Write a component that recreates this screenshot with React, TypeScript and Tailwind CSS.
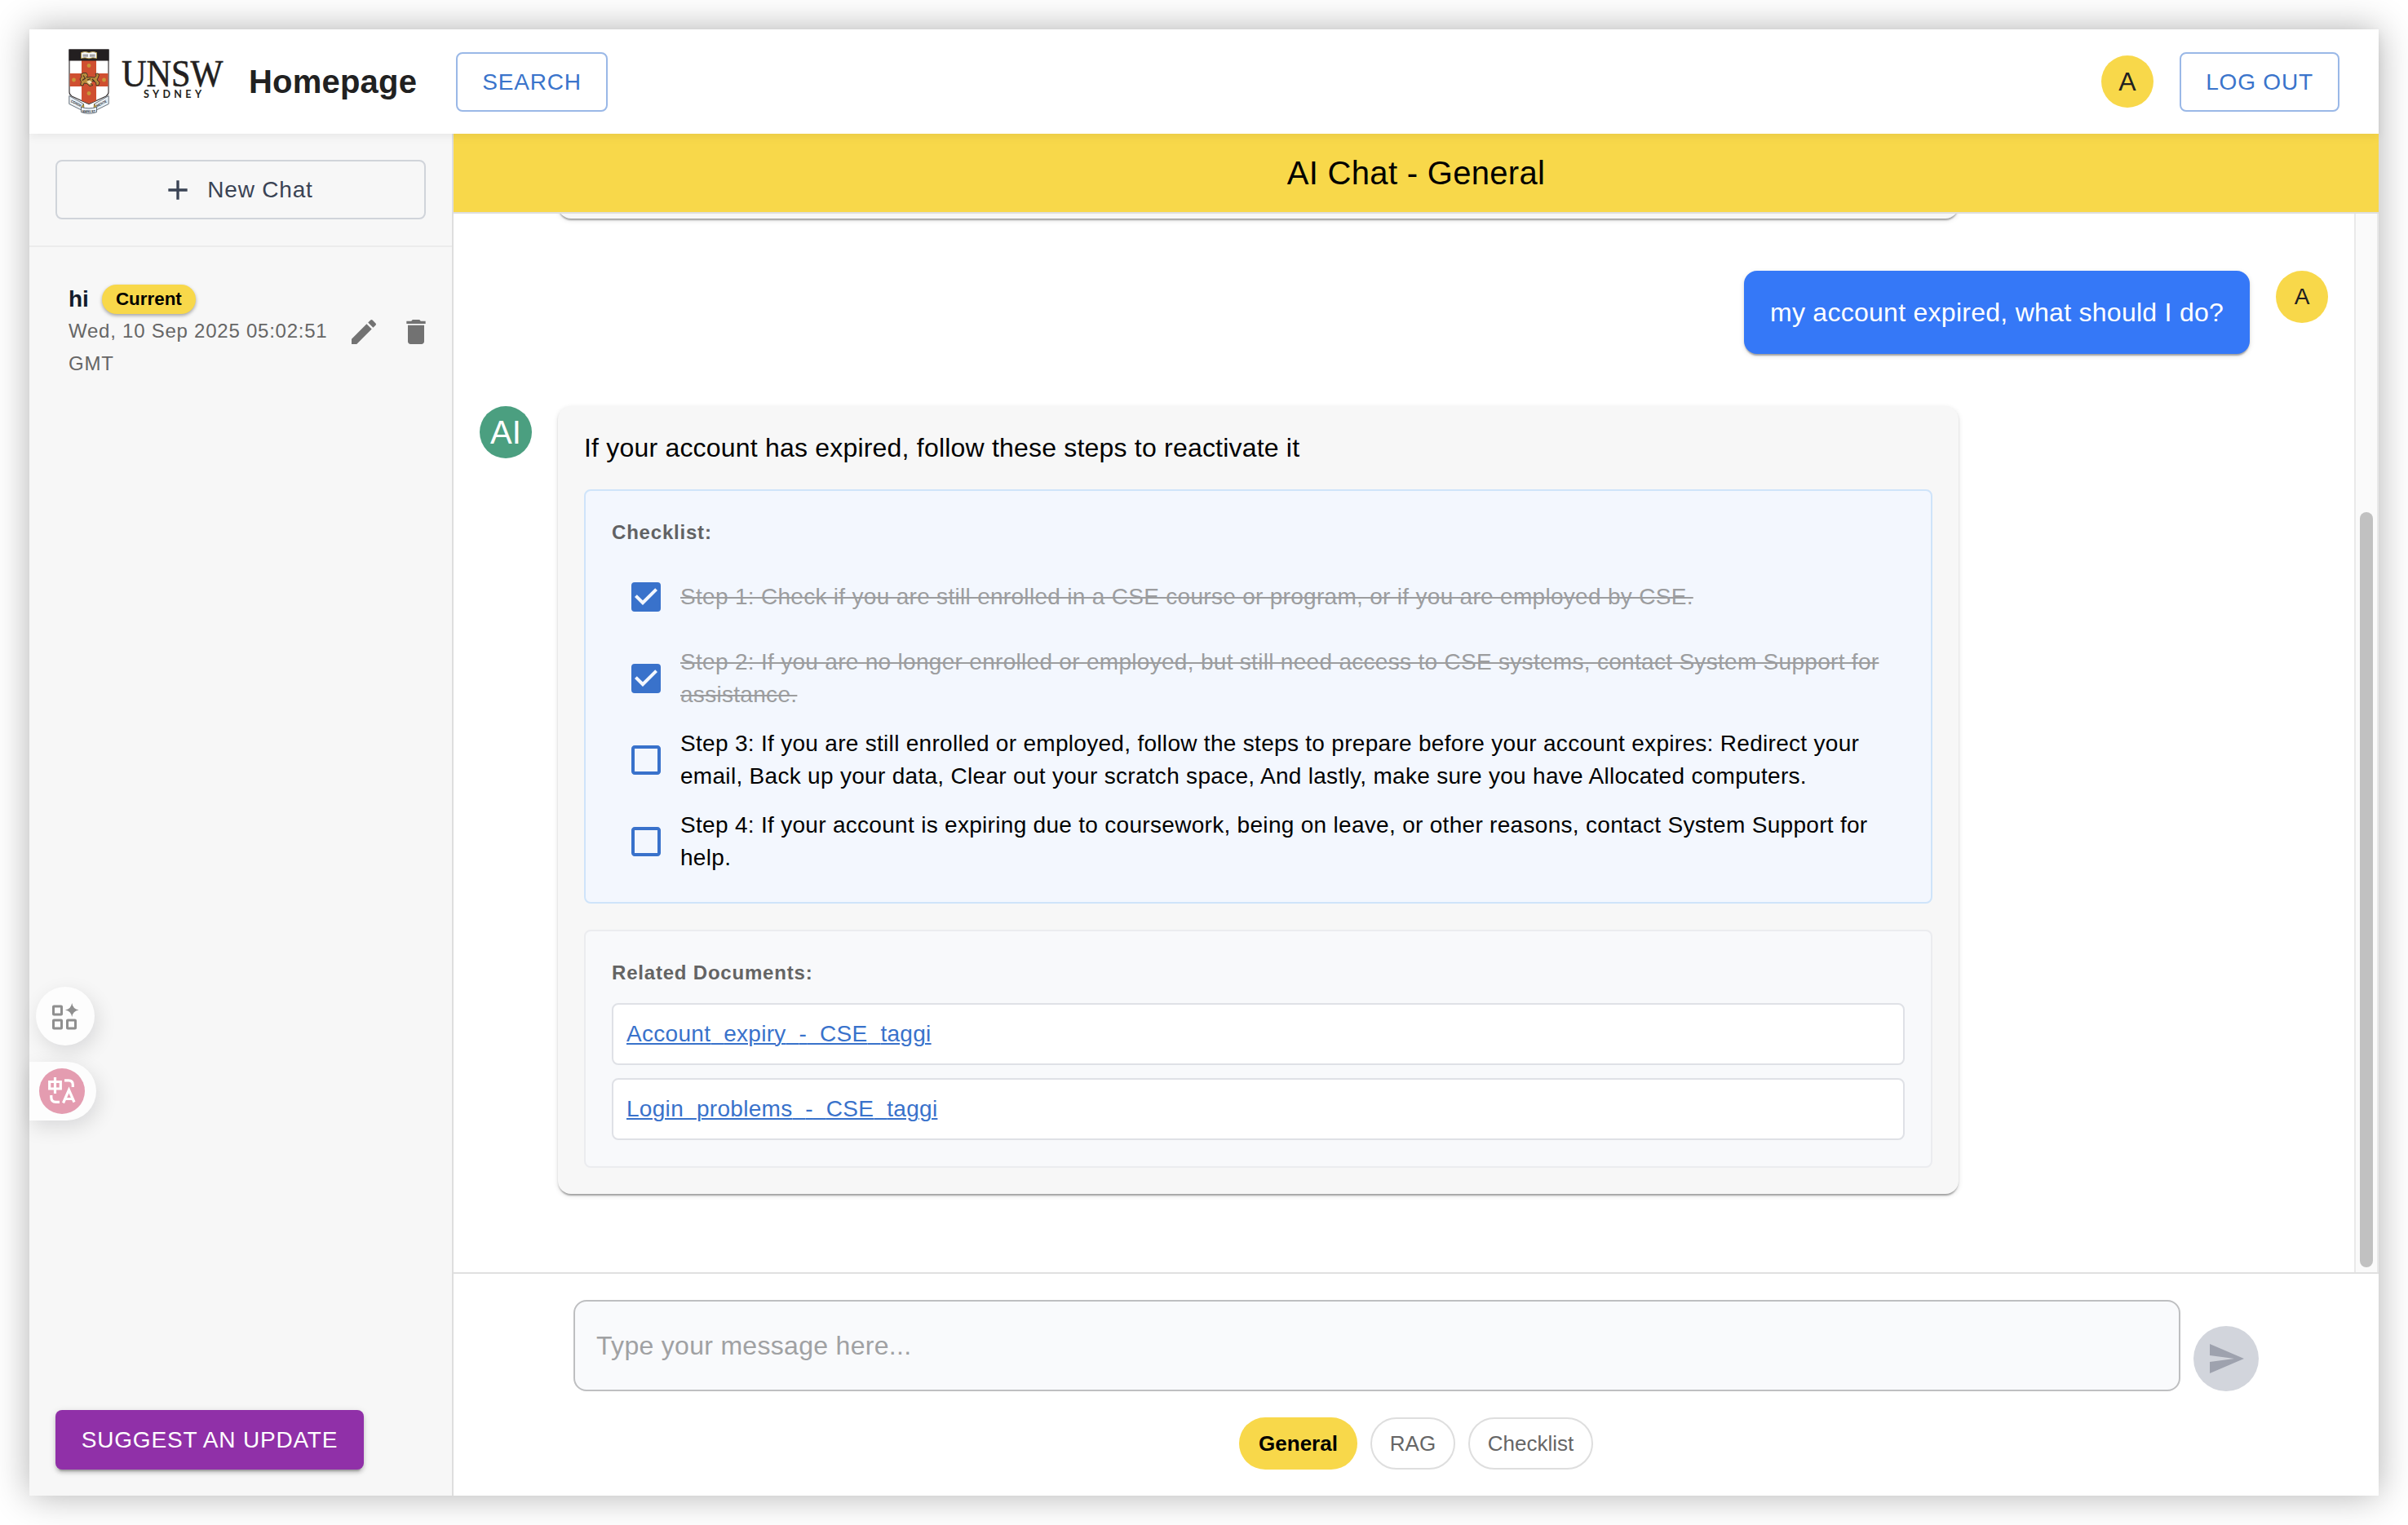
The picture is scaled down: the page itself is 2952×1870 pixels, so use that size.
import React from "react";
import {
  MdAdd,
  MdCheckBox,
  MdCheckBoxOutlineBlank,
  MdDelete,
  MdEdit,
  MdSend,
} from "react-icons/md";

const paperShadow =
  "shadow-[0_4px_2px_-2px_rgba(0,0,0,0.2),0_2px_2px_0_rgba(0,0,0,0.14),0_2px_6px_0_rgba(0,0,0,0.12)]";

const steps = [
  {
    done: true,
    lines: ["Step 1: Check if you are still enrolled in a CSE course or program, or if you are employed by CSE."],
  },
  {
    done: true,
    lines: [
      "Step 2: If you are no longer enrolled or employed, but still need access to CSE systems, contact System Support for",
      "assistance.",
    ],
  },
  {
    done: false,
    lines: [
      "Step 3: If you are still enrolled or employed, follow the steps to prepare before your account expires: Redirect your",
      "email, Back up your data, Clear out your scratch space, And lastly, make sure you have Allocated computers.",
    ],
  },
  {
    done: false,
    lines: [
      "Step 4: If your account is expiring due to coursework, being on leave, or other reasons, contact System Support for",
      "help.",
    ],
  },
];

const documents = ["Account_expiry_-_CSE_taggi", "Login_problems_-_CSE_taggi"];

function Logo() {
  return (
    <svg width="192" height="80" viewBox="0 0 192 80" className="shrink-0 overflow-visible">
      <path d="M1 1H49V53Q49 56 46 58L25 67.500L4 58Q1 56 1 53Z" fill="#fff" stroke="#3a3637" strokeWidth="1.2" />
      <path d="M16 14H34V63.500L25 67L16 63.500Z" fill="#cf4f31" />
      <path d="M1.500 30H48.500V46H1.500Z" fill="#cf4f31" />
      <path d="M0.500 0.500H49.500V14.500H0.500Z" fill="#231f20" />
      <path d="M15.500 4.500Q20 2.500 25 4.500Q30 2.500 34.500 4.500V11.500Q30 10 25 11.800Q20 10 15.500 11.500Z" fill="#f4f6f8" stroke="#b59a45" strokeWidth="0.9" />
      <path d="M17.500 7.300H24M26 7.300H32.500M17.500 9H24M26 9H32.500" stroke="#5a5655" strokeWidth="0.8" />
      <g fill="#c8973a">
        <circle cx="25" cy="20.500" r="2.400" />
        <circle cx="25" cy="54.500" r="2.400" />
        <circle cx="6.500" cy="38" r="2.400" />
        <circle cx="43.500" cy="38" r="2.400" />
      </g>
      <path
        d="M14.500 44L15.500 40.500L14 37L16 34L15 31.500L18 29.500L22 29.500L23.500 32.500L22 35L27 34.500L32 35L34 33L33 30.500L36 30L37.500 32L36 36L35 38L38 41L37 44.500L34 45L33.500 41L30 39L27 42L30 44.500L26 45.500L22.500 42.500L19 42L18 45Z"
        fill="#b98b3c"
        stroke="#4b3526"
        strokeWidth="1"
      />
      <path d="M18 32.500L20.500 36L17 38.500M23 38L27 36.500M29 37L32 40" fill="none" stroke="#3d2b20" strokeWidth="1.100" />
      <path d="M22 40L26 38.500L29 41L25.500 43.500Z" fill="#efe2b5" />
      <path d="M0.800 57.500L18.500 67.500L17 75.500L0.800 67.500Z" fill="#eaf1f7" stroke="#55606a" strokeWidth="0.900" />
      <path d="M49.200 57.500L31.500 67.500L33 75.500L49.200 67.500Z" fill="#eaf1f7" stroke="#55606a" strokeWidth="0.900" />
      <path d="M18.500 67.500L15.500 71.500L19 74Z M31.500 67.500L34.500 71.500L31 74Z" fill="#d9b63c" stroke="#6b5a28" strokeWidth="0.700" />
      <path d="M15.500 71.200Q25 74.500 34.500 71.200V77.500Q25 81 15.500 77.500Z" fill="#eaf1f7" stroke="#55606a" strokeWidth="0.900" />
      <g fontFamily="'Liberation Sans', sans-serif" fontWeight="700" fill="#2c3238">
        <text x="2.500" y="65" fontSize="4.400" textLength="14" lengthAdjust="spacingAndGlyphs" transform="rotate(27 2.500 65)">CORDE</text>
        <text x="17" y="77.800" fontSize="4.400" textLength="16" lengthAdjust="spacingAndGlyphs">MANU ET</text>
        <text x="35" y="71.500" fontSize="4.400" textLength="14" lengthAdjust="spacingAndGlyphs" transform="rotate(-27 35 71.500)">MENTE</text>
      </g>
      <text transform="translate(65 46.300) scale(0.9 1)" fontFamily="'Liberation Serif', serif" fontSize="47" fill="#231f20" stroke="#231f20" strokeWidth="0.600">
        UNSW
      </text>
      <text x="92" y="59.500" fontFamily="Lato, sans-serif" fontWeight="700" fontSize="12.500" fill="#231f20" textLength="71" lengthAdjust="spacing">
        SYDNEY
      </text>
    </svg>
  );
}

function Header() {
  return (
    <header className="relative z-10 flex h-32 shrink-0 items-center bg-white pr-12 pl-12 shadow-[0_4px_10px_rgba(0,0,0,0.06)]">
      <Logo />
      <h1 className="ml-[29px] w-[254px] text-[40px] leading-[64px] font-bold tracking-[0.2px] text-[#212121]">Homepage</h1>
      <button className="h-[73px] w-[186px] rounded-lg border-2 border-[#9ab8e7] text-[28px] leading-[49px] tracking-[0.8px] text-[#3a74cb]">
        SEARCH
      </button>
      <div className="ml-auto flex size-16 items-center justify-center rounded-full bg-[#f8d84a] text-[32px] text-[#212121]">A</div>
      <button className="ml-8 h-[73px] w-[196px] rounded-lg border-2 border-[#9ab8e7] text-[28px] leading-[49px] tracking-[0.8px] text-[#3a74cb]">
        LOG OUT
      </button>
    </header>
  );
}

function FloatingTools() {
  return (
    <div className="absolute top-[1046px] left-0 flex flex-col gap-5">
      <div className="ml-2 flex size-[72px] items-center justify-center rounded-full bg-[#fdfdfd] shadow-[4px_8px_24px_rgba(0,0,20,0.12)]">
        <svg width="34" height="36" viewBox="0 0 34 36" fill="none" stroke="#8f8f8f" strokeWidth="3">
          <rect x="2.500" y="6" width="10" height="10" rx="0.600" />
          <rect x="2.500" y="23" width="10" height="10" rx="0.600" />
          <rect x="19.500" y="23" width="10" height="10" rx="0.600" />
          <path d="M25.200 2Q26.300 9.200 33.500 10.500Q26.300 11.800 25.200 19Q24.100 11.800 17 10.500Q24.100 9.200 25.200 2Z" fill="#8f8f8f" stroke="none" />
        </svg>
      </div>
      <div className="flex h-[72px] w-[82px] items-center rounded-r-full bg-[#fdfdfd] pl-3 shadow-[4px_8px_24px_rgba(0,0,20,0.12)]">
        <svg width="56" height="56" viewBox="0 0 56 56" fill="none" stroke="#fff" strokeWidth="3.200">
          <circle cx="28" cy="28" r="28" fill="#e49cb0" stroke="none" />
          <path d="M12.700 16.500H26.300V25H12.700ZM19.500 11V31" />
          <path d="M31 14.800H36Q41.300 14.800 41.300 20V23" />
          <path d="M14.800 33V35.500Q14.800 41.300 20.500 41.300H25" />
          <path d="M29.500 42.500L36.500 26.500L43 41.500M32 37.500H41" />
        </svg>
      </div>
    </div>
  );
}

function Sidebar() {
  return (
    <aside className="relative flex w-[520px] shrink-0 flex-col border-r-2 border-[#dedede] bg-[#f7f7f7]">
      <div className="border-b-2 border-[#ececec] p-8">
        <button className="flex h-[73px] w-full items-center justify-center gap-4 rounded-lg border-2 border-[#d0d4da] pr-2 text-[28px] leading-[49px] tracking-[0.8px] text-[#3a4354]">
          <MdAdd size={40} />
          New Chat
        </button>
      </div>
      <div className="flex items-center pt-[44px] pl-12">
        <div className="w-[326px] shrink-0">
          <div className="flex h-10 items-center gap-4">
            <span className="text-[28px] leading-10 font-bold text-[#141b2b]">hi</span>
            <span className="flex h-9 w-[115px] items-center justify-center rounded-full bg-[#f8d84a] text-[22.4px] font-bold text-black shadow-[0_2px_4px_rgba(0,0,0,0.35)]">
              Current
            </span>
          </div>
          <p className="-mt-px pb-px text-[24px] leading-10 tracking-[0.76px] whitespace-nowrap text-[#666]">
            Wed, 10 Sep 2025 05:02:51
            <br />
            GMT
          </p>
        </div>
        <div className="ml-4 flex gap-6 text-[#727272]">
          <MdEdit size={40} />
          <MdDelete size={40} />
        </div>
      </div>
      <button className="mt-auto mb-8 ml-8 h-[73px] w-[378px] rounded-lg bg-[#9030a8] text-[28px] leading-[49px] tracking-[0.8px] text-white shadow-[0_6px_2px_-4px_rgba(0,0,0,0.2),0_4px_4px_0_rgba(0,0,0,0.14),0_2px_10px_0_rgba(0,0,0,0.12)]">
        SUGGEST AN UPDATE
      </button>
      <FloatingTools />
    </aside>
  );
}

function Checklist() {
  return (
    <section className="mt-8 rounded-lg border-2 border-[#cfe4fa] bg-[#f3f7fe] p-8">
      <h3 className="-mt-px pb-px text-[24px] leading-10 font-bold tracking-[0.8px] text-[#616264]">Checklist:</h3>
      <ul className="mt-4 flex flex-col gap-4">
        {steps.map((step) => (
          <li key={step.lines[0]} className="flex h-[84px] items-center">
            <span className="flex size-[84px] shrink-0 items-center justify-center text-[#3972cb]">
              {step.done ? <MdCheckBox size={48} /> : <MdCheckBoxOutlineBlank size={48} />}
            </span>
            <span
              className={
                step.done
                  ? "text-[28px] leading-10 tracking-[0.3px] text-[#9c9d9f] line-through decoration-2"
                  : "text-[28px] leading-10 tracking-[0.3px] text-black"
              }
            >
              {step.lines.map((line) => (
                <span key={line} className="block whitespace-nowrap">
                  {line}
                </span>
              ))}
            </span>
          </li>
        ))}
      </ul>
    </section>
  );
}

// Underscores merge into the link's underline instead of sitting below it.
function DocumentLink({ name }: { name: string }) {
  return (
    <a className="text-[28px] leading-10 tracking-[0.3px] text-[#3972cb] underline decoration-2 [text-underline-offset:2px]">
      {name.split(/(_)/).map((part, i) =>
        part === "_" ? (
          <span key={i} className="text-transparent [text-decoration-skip-ink:none]">
            _
          </span>
        ) : (
          part
        ),
      )}
    </a>
  );
}

function RelatedDocuments() {
  return (
    <section className="mt-8 rounded-lg border-2 border-[#ebecef] bg-[#f8f9fb] p-8">
      <h3 className="-mt-px pb-px text-[24px] leading-10 font-bold tracking-[0.8px] text-[#646464]">Related Documents:</h3>
      <div className="mt-4 flex flex-col gap-4">
        {documents.map((name) => (
          <div key={name} className="flex h-[76px] items-center rounded-lg border-2 border-[#dfe1e6] bg-white px-4">
            <DocumentLink name={name} />
          </div>
        ))}
      </div>
    </section>
  );
}

function Messages() {
  return (
    <div className="flex min-h-0 flex-1">
      <div className="flex min-w-0 flex-1 flex-col justify-end gap-16 overflow-hidden px-8 pb-24">
        <div className={`ml-24 h-40 w-[1717px] shrink-0 rounded-2xl bg-[#f7f7f7] ${paperShadow}`} />
        <div className="flex shrink-0 justify-end gap-8">
          <p className={`h-[102px] w-[620px] rounded-2xl bg-[#3578f7] p-8 text-[32px] leading-[38px] tracking-[0.27px] whitespace-nowrap text-white ${paperShadow}`}>
            my account expired, what should I do?
          </p>
          <div className="flex size-16 items-center justify-center rounded-full bg-[#f8d84a] text-[28px] text-[#212121]">A</div>
        </div>
        <div className="flex shrink-0 gap-8">
          <div className="flex size-16 shrink-0 items-center justify-center rounded-full bg-[#4b9f80] text-[40px] text-white">AI</div>
          <article className={`w-[1717px] rounded-2xl bg-[#f7f7f7] p-8 ${paperShadow}`}>
            <p className="text-[32px] leading-[38px] tracking-[0.2px] text-black">
              If your account has expired, follow these steps to reactivate it
            </p>
            <Checklist />
            <RelatedDocuments />
          </article>
        </div>
      </div>
      <div className="flex w-[30px] shrink-0 flex-col items-center justify-end border-x-2 border-[#e9e9e9] bg-[#fafafa] pb-1.5">
        <div className="h-[926px] w-4 rounded-full bg-[#c1c1c1]" />
      </div>
    </div>
  );
}

function Composer() {
  return (
    <footer className="flex h-[274px] shrink-0 flex-col items-center border-t-2 border-[#e0e0e0] bg-white pt-8">
      <div className="flex items-end gap-4">
        <div className="flex h-28 w-[1970px] items-center rounded-2xl border-2 border-[#bebfc1] bg-[#f9fafc] px-[26px] text-[32px] tracking-[0.3px] text-[#a0a1a3]">
          Type your message here...
        </div>
        <button className="flex size-20 items-center justify-center rounded-full bg-[#d2d5dc] text-[#9ea2ae]">
          <MdSend size={48} />
        </button>
      </div>
      <div className="mt-8 flex gap-4 text-[26px]">
        <button className="h-16 w-[145px] rounded-full bg-[#f8d84a] font-bold text-black">General</button>
        <button className="h-16 w-[104px] rounded-full border-2 border-[#dedede] text-[#666]">RAG</button>
        <button className="h-16 w-[153px] rounded-full border-2 border-[#dedede] text-[#666]">Checklist</button>
      </div>
    </footer>
  );
}

export default function App() {
  return (
    <div className="h-[1870px] w-[2952px] overflow-hidden bg-white p-9 font-['Liberation_Sans',Arial,sans-serif]">
      <div className="flex h-[1798px] w-[2880px] flex-col bg-white shadow-[0_0_42px_rgba(0,0,0,0.31)]">
        <Header />
        <div className="flex min-h-0 flex-1">
          <Sidebar />
          <main className="flex min-w-0 flex-1 flex-col">
            <h2 className="flex h-[98px] shrink-0 items-center justify-center border-b-2 border-[#dedede] bg-[#f8d84a] text-[40px] tracking-[0.3px] text-black">
              AI Chat - General
            </h2>
            <Messages />
            <Composer />
          </main>
        </div>
      </div>
    </div>
  );
}
